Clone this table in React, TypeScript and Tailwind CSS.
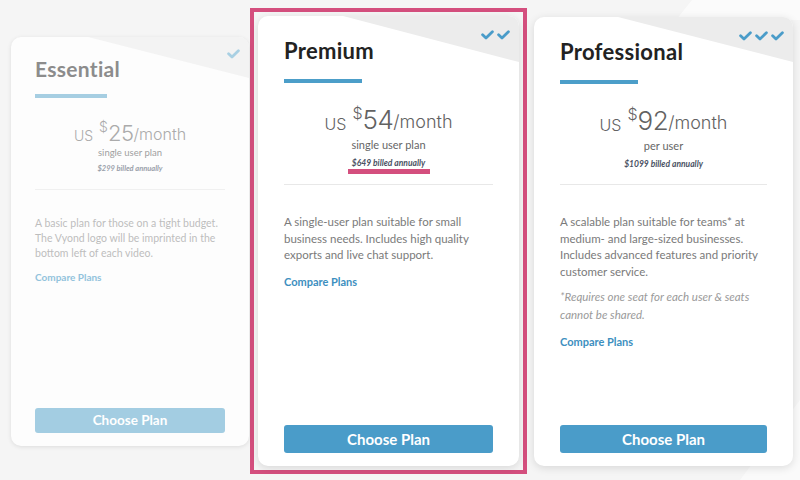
import React from "react";

const Check = ({ color }: { color: string }) => (
  <svg width="13" height="10" viewBox="0 0 13 10">
    <path d="M1.6 4.8 L5 8 L11.4 1.8" fill="none" stroke={color} strokeWidth="2.8" strokeLinecap="round" strokeLinejoin="round" />
  </svg>
);

type CardProps = {
  title: string;
  price: string;
  sub: string;
  billed: string;
  desc: React.ReactNode;
  checks: number;
  faded?: boolean;
  highlight?: boolean;
  w: number;
  triStart: number;
  triDrop: number;
  note?: React.ReactNode;
};

function Card(p: CardProps) {
  const f = p.faded;
  return (
    <div
      className={`relative h-full w-full rounded-[10px] overflow-hidden flex flex-col ${
        f ? "bg-[#fdfdfd] shadow-[0_1px_4px_rgba(0,0,0,0.10)]" : "bg-white shadow-[0_2px_8px_rgba(0,0,0,0.12)]"
      }`}
    >
      <svg className="absolute top-0 left-0" width={p.w} height="70">
        <polygon points={`${p.triStart},0 ${p.w},0 ${p.w},${p.triDrop}`} fill={f ? "#f3f3f3" : "#ececec"} />
      </svg>
      <div className={`absolute flex gap-[3px] ${f ? "top-[12px] right-[9px]" : "top-[14px] right-[9px]"}`}>
        {Array.from({ length: p.checks }).map((_, i) => (
          <Check key={i} color={f ? "#a9d0e3" : "#4a9cc9"} />
        ))}
      </div>
      <div className={`relative flex flex-col h-full ${f ? "px-[24px] pt-[16px] pb-[13px]" : "px-[26px] pt-[19px] pb-[13px]"}`}>
        <div
          className={`font-bold leading-none tracking-[0.3px] ${
            f ? "text-[21px] text-[#8c8c8c] pt-[5px]" : "text-[22px] text-[#222] pt-[5px]"
          }`}
        >
          {p.title}
        </div>
        <div className={`h-[4px] ${f ? "bg-[#a6cee2] mt-[15px] w-[72px]" : "bg-[#4c9ec9] mt-[17px] w-[78px]"}`} />
        <div className={`flex flex-col items-center ${f ? "mt-[22px]" : "mt-[22px]"}`}>
          <div
            className={`flex items-start leading-none font-light ${f ? "text-[#ababab]" : "text-[#626262]"}`}
            style={{ fontFamily: "Inter, Lato, sans-serif" }}
          >
            <span className={`${f ? "text-[14px] mt-[9px]" : "text-[16px] mt-[11px]"} mr-[6px]`}>US</span>
            <span className={`${f ? "text-[14px] mt-[0px]" : "text-[16px] mt-[0px]"}`}>$</span>
            <span className={`${f ? "text-[22px] mt-[2px] tracking-[-0.5px]" : "text-[26px] mt-[2px] tracking-[-0.5px]"}`}>{p.price}</span>
            <span className={`${f ? "text-[16px] mt-[6px]" : "text-[18px] mt-[8px]"}`}>/month</span>
          </div>
          <div className={`${f ? "text-[9.5px] mt-[2px] text-[#a0a0a0]" : "text-[11px] mt-[4px] text-[#666]"}`}>{p.sub}</div>
          <div
            className={`italic font-bold ${
              f ? "text-[7.5px] mt-[3px] text-[#9aa0aa]" : "text-[8.5px] mt-[3px] text-[#4a5263]"
            }`}
          >
            {p.billed}
          </div>
          {p.highlight && <div className="h-[5px] w-[82px] bg-[#d44f7e] mt-[0px]" />}
        </div>
        <div
          className={`h-px ${f ? "bg-[#f0f0f0] mt-[14px]" : p.highlight ? "bg-[#e8e8e8] mt-[10px]" : "bg-[#e8e8e8] mt-[14px]"}`}
        />
        <div
          className={`${f ? "text-[10.5px] text-[#bdbdbd] leading-[15px] mt-[26px]" : "text-[11.5px] text-[#7a7a7a] leading-[16.5px] mt-[29px]"}`}
        >
          {p.desc}
        </div>
        {p.note}
        <div className={`font-bold ${f ? "text-[10px] text-[#92c3dc] mt-[9px]" : "text-[11px] text-[#3d8fc0] mt-[10px]"}`}>
          Compare Plans
        </div>
        <div className="flex-1" />
        <div
          className={`flex items-center justify-center rounded-[3px] text-white font-bold ${
            f ? "h-[25px] bg-[#a3cde2] text-[13.5px]" : "h-[28px] bg-[#4a9cc9] text-[15px]"
          }`}
        >
          Choose Plan
        </div>
      </div>
    </div>
  );
}

export default function App() {
  return (
    <div
      className="relative w-[800px] h-[480px] overflow-hidden bg-[#f5f5f5]"
      style={{ fontFamily: "Lato, 'Noto Sans', sans-serif" }}
    >
      <svg className="absolute inset-0" width="800" height="480">
        <polygon points="692,0 800,0 800,20 676,20" fill="#fbfbfb" />
        <polygon points="740,480 800,400 800,480" fill="#fafafa" />
      </svg>
      <div className="relative flex items-start pl-[11px]">
        <div className="mt-[37px] w-[238px] h-[409px]">
          <Card
            faded
            w={238}
            title="Essential"
            price="25"
            sub="single user plan"
            billed="$299 billed annually"
            checks={1}
            triStart={77}
            triDrop={41}
            desc={
              <>
                A basic plan for those on a tight budget.
                <br />
                The Vyond logo will be imprinted in the
                <br />
                bottom left of each video.
              </>
            }
          />
        </div>
        <div className="ml-[1px] mt-[8px] w-[277px] h-[466px] border-[4px] border-[#d44f7e] p-[4px] pb-[4px]">
          <Card
            highlight
            w={261}
            title="Premium"
            price="54"
            sub="single user plan"
            billed="$649 billed annually"
            checks={2}
            triStart={85}
            triDrop={46}
            desc={
              <>
                A single-user plan suitable for small
                <br />
                business needs. Includes high quality
                <br />
                exports and live chat support.
              </>
            }
          />
        </div>
        <div className="ml-[7px] mt-[17px] w-[259px] h-[449px]">
          <Card
            w={259}
            title="Professional"
            price="92"
            sub="per user"
            billed="$1099 billed annually"
            checks={3}
            triStart={84}
            triDrop={45}
            desc={
              <>
                A scalable plan suitable for teams* at
                <br />
                medium- and large-sized businesses.
                <br />
                Includes advanced features and priority
                <br />
                customer service.
              </>
            }
            note={
              <div className="italic text-[11.5px] text-[#9a9a9a] leading-[18px] mt-[8px]">
                *Requires one seat for each user &amp; seats
                <br />
                cannot be shared.
              </div>
            }
          />
        </div>
      </div>
    </div>
  );
}
